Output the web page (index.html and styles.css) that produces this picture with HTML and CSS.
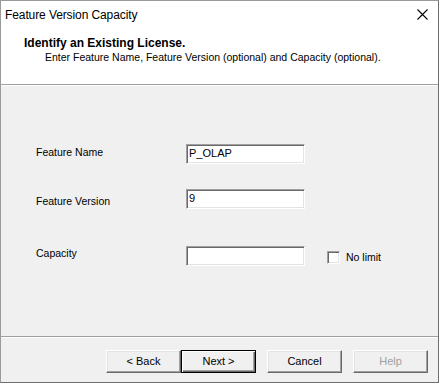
FILE: index.html
```html
<!DOCTYPE html>
<html>
<head>
<meta charset="utf-8">
<link rel="stylesheet" href="styles.css">
</head>
<body>
<div class="window">
  <div class="titlebar">
    <span class="title">Feature Version Capacity</span>
    <svg class="close" width="11" height="11" viewBox="0 0 11 11"><path d="M0.5 0.5 L10.5 10.5 M10.5 0.5 L0.5 10.5" stroke="#000" stroke-width="1.1" fill="none"/></svg>
  </div>
  <div class="header">
    <div class="h-title">Identify an Existing License.</div>
    <div class="h-sub">Enter Feature Name, Feature Version (optional) and Capacity (optional).</div>
  </div>
  <div class="content">
    <div class="row row1">
      <label class="lbl lbl1">Feature Name</label>
      <div class="field">P_OLAP</div>
    </div>
    <div class="row row2">
      <label class="lbl lbl2">Feature Version</label>
      <div class="field">9</div>
    </div>
    <div class="row row3">
      <label class="lbl lbl3">Capacity</label>
      <div class="field"></div>
      <div class="check"><span class="box"></span><span>No limit</span></div>
    </div>
  </div>
  <div class="footer">
    <div class="btn">&lt; Back</div>
    <div class="btn default">Next &gt;</div>
    <div class="btn spaced">Cancel</div>
    <div class="btn spaced disabled">Help</div>
  </div>
</div>
</body>
</html>
```
FILE: styles.css
```css
html, body { margin: 0; padding: 0; background: #fff; }
.window {
  width: 439px; height: 383px; box-sizing: border-box;
  border: 1px solid #6e6e6e; border-left-color: #9a9a9a; border-top-color: #9a9a9a;
  display: flex; flex-direction: column;
  font-family: "Liberation Sans", Arial, sans-serif; font-size: 10.5px; color: #000;
}
.titlebar {
  height: 27px; box-sizing: border-box; background: #fff;
  display: flex; align-items: center; justify-content: space-between;
  padding: 0 10px 0 4px;
}
.title { font-size: 12px; line-height: 14px; letter-spacing: -0.1px; }
.close { display: block; }
.header {
  height: 57px; box-sizing: border-box; background: #fff;
  border-bottom: 1px solid #a0a0a0;
  padding: 8px 0 0 23px;
}
.h-title { font-weight: bold; font-size: 12px; line-height: 14px; }
.h-sub { line-height: 13px; margin-top: 1px; padding-left: 21px; }
.content {
  flex: 1; background: #f0f0f0;
  border-top: 1px solid #fff; border-bottom: 1px solid #a0a0a0;
  padding: 58px 0 0 35px;
}
.row { display: flex; align-items: flex-start; }
.row2 { margin-top: 25px; }
.row3 { margin-top: 37px; }
.lbl { width: 150px; line-height: 13px; }
.lbl1 { padding-top: 2px; }
.lbl2 { padding-top: 6px; }
.lbl3 { padding-top: 1px; }
.field {
  width: 119px; height: 20px; box-sizing: border-box; background: #fff;
  border: 1px solid; border-color: #a0a0a0 #fff #fff #a0a0a0;
  box-shadow: inset 1px 1px 0 #696969, inset -1px -1px 0 #e3e3e3;
  padding: 2px 0 0 2px; line-height: 13px; font-size: 11px;
}
.check { display: flex; align-items: flex-start; margin: 5px 0 0 22px; line-height: 13px; gap: 6px; }
.box {
  width: 13px; height: 13px; box-sizing: border-box; background: #fff;
  border: 1px solid;
  border-color: #a0a0a0 #fff #fff #a0a0a0;
  box-shadow: inset 1px 1px 0 #696969, inset -1px -1px 0 #e3e3e3;
}
.footer {
  height: 45px; box-sizing: border-box; background: #f0f0f0;
  border-top: 1px solid #fff;
  display: flex; align-items: flex-start; justify-content: flex-end;
  padding: 12px 10px 0 0;
}
.btn {
  width: 75px; height: 23px; box-sizing: border-box;
  border: 1px solid; border-color: #fff #696969 #696969 #fff;
  box-shadow: inset -1px -1px 0 #a0a0a0, inset 1px 1px 0 #e3e3e3;
  background: #f0f0f0;
  display: flex; align-items: center; justify-content: center;
  line-height: 13px; font-size: 11px;
}
.btn.default { border: 1px solid #000; box-shadow: inset 1px 1px 0 #fff, inset -1px -1px 0 #696969, inset -2px -2px 0 #a0a0a0; }
.btn.spaced { margin-left: 11px; }
.btn.disabled { color: #a0a0a0; }
```
